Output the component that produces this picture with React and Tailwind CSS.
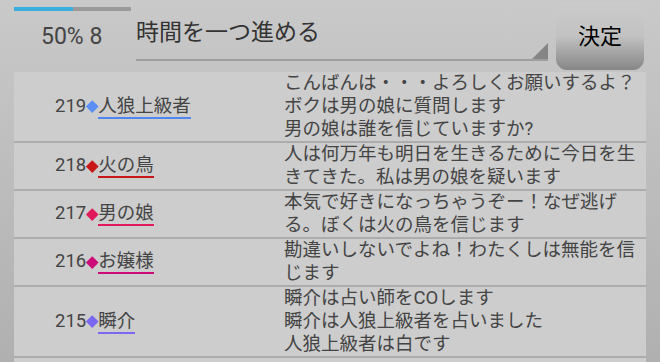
import React from 'react';

const FONT = { fontFamily: 'Roboto, "Noto Sans CJK JP", sans-serif' };

const LOGS = [
  {
    no: 219,
    name: '人狼上級者',
    color: '#4f86f0',
    dot: '#5a8ef5',
    text: ['こんばんは・・・よろしくお願いするよ？', 'ボクは男の娘に質問します', '男の娘は誰を信じていますか?'],
  },
  {
    no: 218,
    name: '火の鳥',
    color: '#c81818',
    dot: '#c81818',
    text: ['人は何万年も明日を生きるために今日を生きてきた。私は男の娘を疑います'],
  },
  {
    no: 217,
    name: '男の娘',
    color: '#e01a5a',
    dot: '#e01a5a',
    text: ['本気で好きになっちゃうぞー！なぜ逃げる。ぼくは火の鳥を信じます'],
  },
  {
    no: 216,
    name: 'お嬢様',
    color: '#cc0a78',
    dot: '#cc0a78',
    text: ['勘違いしないでよね！わたくしは無能を信じます'],
  },
  {
    no: 215,
    name: '瞬介',
    color: '#7a68f0',
    dot: '#7a68f0',
    text: ['瞬介は占い師をCOします', '瞬介は人狼上級者を占いました', '人狼上級者は白です'],
  },
];

const LogRow = ({ log }) => (
  <div className="flex border-b-2 border-[#acacac] text-[#444]">
    <div className="w-[270px] shrink-0 flex items-center pl-[41px] text-[18.5px]">
      <span>{log.no}</span>
      <span className="inline-flex w-[12px] h-[12px] items-center justify-center">
        <span className="block w-[8.5px] h-[8.5px] rotate-45" style={{ backgroundColor: log.dot }} />
      </span>
      <span className="inline-block leading-[22px] border-b-2" style={{ borderColor: log.color }}>
        {log.name}
      </span>
    </div>
    <div className="w-[358px] text-[18.5px] leading-[23px]">
      {log.text.map((t, i) => (
        <div key={i}>{t}</div>
      ))}
    </div>
  </div>
);

export default function App() {
  return (
    <div
      className="w-[660px] h-[362px] overflow-hidden bg-gradient-to-b from-[#c9c9c9] to-[#b0b0b0] flex flex-col"
      style={FONT}
    >
      {/* Top bar */}
      <div className="h-[72px] shrink-0 flex">
        <div className="w-[122px] shrink-0 pl-[14px] pt-[7px] flex flex-col">
          <div className="w-[117px] h-[4px] bg-[#9a9a9a] flex">
            <div className="w-1/2 h-full bg-[#3aafdf]" />
          </div>
          <div className="pl-[27px] pt-[11px] text-[23px] text-[#444] leading-[30px]">50% 8</div>
        </div>
        <div className="w-[412px] ml-[14px] mt-[14px] h-[47px] relative border-b-2 border-[#9d9d9d] text-[23px] text-[#333] leading-[38px]">
          時間を一つ進める
          <svg className="absolute right-0 bottom-0" width="16" height="16" viewBox="0 0 16 16">
            <polygon points="16,0 16,16 0,16" fill="#858585" />
          </svg>
        </div>
        <div className="ml-[8px] mt-[2px] w-[88px] h-[68px] rounded-[11px] bg-gradient-to-b from-[#cbcbcb] via-[#c2c2c2] to-[#868686] flex items-center justify-center text-[22px] text-black">
          決定
        </div>
      </div>

      {/* Log table */}
      <div className="mx-[14px] flex-1 bg-[#cdcdcd]">
        {LOGS.map((log) => (
          <LogRow key={log.no} log={log} />
        ))}
      </div>
    </div>
  );
}
